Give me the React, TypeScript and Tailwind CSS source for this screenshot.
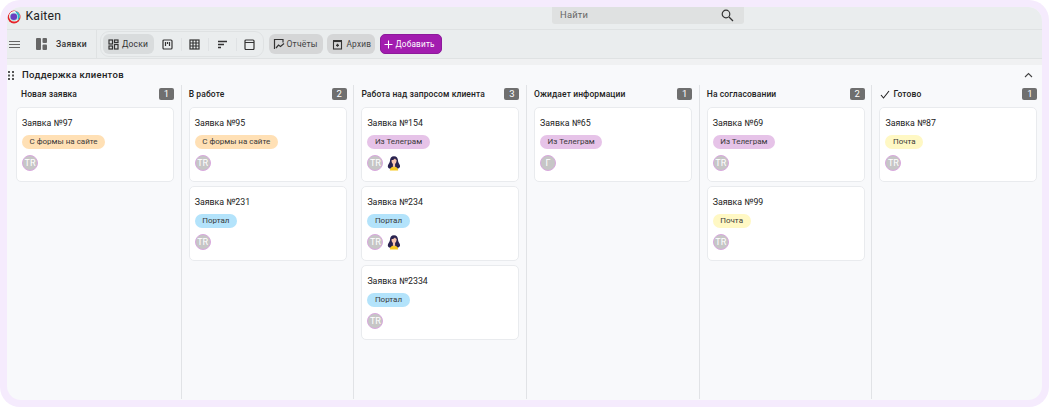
import React from "react";

type Card = { title: string; tag: string; tagClass: string; avatar?: string; girl?: boolean };
type Col = { title: string; count: number; check?: boolean; cards: Card[] };

const orange = "bg-[#ffe0b5]";
const purple = "bg-[#e6c3e8]";
const blue = "bg-[#b3e3fb]";
const yellow = "bg-[#fff8c4]";

const columns: Col[] = [
  { title: "Новая заявка", count: 1, cards: [{ title: "Заявка №97", tag: "С формы на сайте", tagClass: orange }] },
  {
    title: "В работе",
    count: 2,
    cards: [
      { title: "Заявка №95", tag: "С формы на сайте", tagClass: orange },
      { title: "Заявка №231", tag: "Портал", tagClass: blue },
    ],
  },
  {
    title: "Работа над запросом клиента",
    count: 3,
    cards: [
      { title: "Заявка №154", tag: "Из Телеграм", tagClass: purple, girl: true },
      { title: "Заявка №234", tag: "Портал", tagClass: blue, girl: true },
      { title: "Заявка №2334", tag: "Портал", tagClass: blue },
    ],
  },
  {
    title: "Ожидает информации",
    count: 1,
    cards: [{ title: "Заявка №65", tag: "Из Телеграм", tagClass: purple, avatar: "Г" }],
  },
  {
    title: "На согласовании",
    count: 2,
    cards: [
      { title: "Заявка №69", tag: "Из Телеграм", tagClass: purple },
      { title: "Заявка №99", tag: "Почта", tagClass: yellow },
    ],
  },
  { title: "Готово", count: 1, check: true, cards: [{ title: "Заявка №87", tag: "Почта", tagClass: yellow }] },
];

function Girl() {
  return (
    <svg width="14" height="16" viewBox="0 0 14 16">
      <path d="M7 1.200C4.300 1.200 3 3.200 3 5.500c0 2-1.300 3-2 4.800-.6 1.700.2 3.200 2 3.400h7.500c1.900-.2 3-1.700 2.400-3.400-.7-1.800-1.900-2.800-1.900-4.800C11 3.200 9.700 1.200 7 1.200z" fill="#2a2350" />
      <path d="M2.800 15.500c0-2.300 1.800-4 4.200-4s4.200 1.700 4.200 4z" fill="#f7c81e" />
      <path d="M4.500 5.200c1.300-.2 3-1 3.500-1.800.4.800 1 1.400 1.600 1.700 0 1.900-.6 3.200-1.500 3.800v2.300L7 12.800l-1.100-1.600V8.900C5 8.300 4.500 7 4.500 5.200z" fill="#f7c4ae" />
    </svg>
  );
}

function Avatar({ text = "TR" }: { text?: string }) {
  return (
    <div className="w-[16px] h-[16px] rounded-full bg-[#c6c6c6] border border-[#d9a8de] flex items-center justify-center text-white text-[9px] leading-none">
      {text}
    </div>
  );
}

function KanbanCard({ card }: { card: Card }) {
  return (
    <div className="h-[75px] w-[158px] shrink-0 bg-white border border-[#e9ebee] rounded-[5px] pl-[5px] pt-[8px] mb-[4px]">
      <div className="text-[8.800px] leading-[15px] text-[#222]">{card.title}</div>
      <div className="flex mt-[4px]">
        <span className={`h-[14px] px-[7.500px] rounded-full text-[8px] leading-[14px] text-[#3a3a3a] ${card.tagClass}`}>
          {card.tag}
        </span>
      </div>
      <div className="flex items-center gap-[4px] mt-[6px]">
        <Avatar text={card.avatar} />
        {card.girl && <Girl />}
      </div>
    </div>
  );
}

function Divider() {
  return <div className="w-px h-[13px] bg-[#dfe2e4] mx-[7.750px]" />;
}

const ic = "#333333";

function GroupIcon() {
  return (
    <svg width="11" height="11" viewBox="0 0 11 11" fill="none" stroke={ic} strokeWidth="1.200">
      <rect x="1" y="1" width="3.500" height="4" />
      <rect x="6.500" y="1" width="3.500" height="2.500" />
      <rect x="1" y="7" width="3.500" height="3" />
      <rect x="6.500" y="5.500" width="3.500" height="4.500" />
    </svg>
  );
}

export default function App() {
  return (
    <div className="w-[1050px] h-[407px] bg-white overflow-hidden font-['Roboto',sans-serif]">
      <div className="w-[1049px] h-[407px] rounded-[20px] bg-[#f5ebfd] p-[7px]">
        <div className="w-[1035px] h-[393px] rounded-[14px] overflow-hidden bg-[#f8f9fb] flex flex-col">
          <header className="h-[23px] shrink-0 bg-[#eaedee] border-b border-[#dfe2e3] relative flex items-center">
            <svg width="14" height="14" viewBox="0 0 14 14" className="mt-[-3px]">
              <circle cx="7" cy="7" r="6.500" fill="#e5242a" />
              <circle cx="7.300" cy="6.300" r="5.300" fill="#ffffff" />
              <path d="M7.500 1a5.300 5.300 0 0 1 5.300 5.300c0 1.800-1 3.400-2.300 4.300 1-3.500-.2-7.500-3-9.600z" fill="#27b5c9" />
              <circle cx="6.800" cy="6.800" r="4.300" fill="#a6e0dc" />
              <circle cx="6.800" cy="6.800" r="3.300" fill="#6b3fc0" />
            </svg>
            <span className="ml-[4.500px] text-[12.200px] leading-none text-[#222] tracking-[0.2px] mt-[-4px]">Kaiten</span>
            <div className="absolute left-[545px] top-0 w-[192px] h-[17px] bg-[#dfe1e1] rounded-b-[3px] flex items-center justify-between pl-[8px] pr-[10px]">
              <span className="text-[9.400px] text-[#666] tracking-[0.2px]">Найти</span>
              <svg width="13" height="13" viewBox="0 0 13 13" fill="none" stroke="#333" strokeWidth="1.200">
                <circle cx="5" cy="5" r="3.800" />
                <path d="M8 8l4 4" />
              </svg>
            </div>
          </header>

          <div className="h-[29px] shrink-0 bg-[#eaedee] border-b border-[#dfe2e3] flex items-center">
            <svg width="11" height="7" viewBox="0 0 11 7" className="ml-[2px]" stroke="#666" strokeWidth="1">
              <path d="M0 .5h11M0 3.500h11M0 6.500h11" />
            </svg>
            <svg width="11" height="12" viewBox="0 0 11 12" className="ml-[16px]" fill="#666">
              <rect x="0" y="0" width="5" height="12" rx="1" />
              <rect x="6.500" y="0" width="4.500" height="5" rx="1" />
              <rect x="6.500" y="6.500" width="4.500" height="5.500" rx="1" />
            </svg>
            <span className="ml-[9px] text-[8.600px] font-medium text-[#333] tracking-[0.3px]">Заявки</span>
            <div className="w-px h-[29px] bg-[#dfe2e3] ml-[9px]" />
            <div className="ml-[3px] h-[26px] w-[164px] border border-[#dfe2e3] rounded-[9px] flex items-center pl-[2px]">
              <div className="h-[20px] w-[51px] rounded-[6px] bg-[#d9dcdd] flex items-center pl-[5px] gap-[3px]">
                <GroupIcon />
                <span className="text-[8.500px] text-[#333] tracking-[0.2px]">Доски</span>
              </div>
              <svg width="11" height="11" viewBox="0 0 11 11" fill="none" stroke={ic} strokeWidth="1.200" className="ml-[8px]">
                <rect x="1" y="1" width="9" height="9" rx="1" />
                <path d="M3.500 3v4M5.500 3v2M7.500 3v4" />
              </svg>
              <Divider />
              <svg width="11" height="11" viewBox="0 0 11 11" fill="none" stroke={ic} strokeWidth="1.200">
                <rect x="1" y="1" width="9" height="9" />
                <path d="M1 4h9M1 7h9M4 1v9M7 1v9" />
              </svg>
              <Divider />
              <svg width="11" height="11" viewBox="0 0 11 11" fill="none" stroke={ic} strokeWidth="1.300">
                <path d="M1 2.500h9M1 5.500h6M1 8.500h3" />
              </svg>
              <Divider />
              <svg width="11" height="11" viewBox="0 0 11 11" fill="none" stroke={ic} strokeWidth="1.200">
                <rect x="1" y="1" width="9" height="9.500" rx="1" />
                <path d="M1 3.500h9" />
              </svg>
            </div>
            <div className="ml-[5px] h-[20px] w-[54px] rounded-[6px] bg-[#d5d6d7] flex items-center pl-[4px] gap-[1.500px]">
              <svg width="12" height="12" viewBox="0 0 12 12" fill="none" stroke={ic} strokeWidth="1.200">
                <path d="M1.500 11V1.500h8.500v3" />
                <path d="M3 10l2.500-3 2 1.500L11 5.500" />
              </svg>
              <span className="text-[8.600px] text-[#444] tracking-[0.2px]">Отчёты</span>
            </div>
            <div className="ml-[4.500px] h-[20px] w-[48px] rounded-[6px] bg-[#d5d6d7] flex items-center pl-[5px] gap-[3px]">
              <svg width="11" height="11" viewBox="0 0 11 11" fill="none" stroke={ic}>
                <rect x="1.500" y="2.500" width="8" height="7.500" strokeWidth="1.100" />
                <path d="M1 2h9" strokeWidth="2" />
                <path d="M5.500 4.800v3M4 6.300h3" strokeWidth="1.300" />
              </svg>
              <span className="text-[8.300px] text-[#444] tracking-[0.2px]">Архив</span>
            </div>
            <div className="ml-[5px] h-[20.500px] w-[61.500px] rounded-[5px] bg-[#a21caf] border border-[#8d1a9b] flex items-center pl-[3px] gap-[2px] text-white">
              <svg width="9" height="9" viewBox="0 0 9 9" stroke="#fff" strokeWidth="1.100">
                <path d="M4.500 0.500v8M0.500 4.500h8" />
              </svg>
              <span className="text-[8.200px] tracking-[0.2px]">Добавить</span>
            </div>
          </div>

          <div className="h-[6px] shrink-0 bg-[#f0f1f2]" />

          <div className="h-[20px] shrink-0 flex items-center">
            <svg width="6" height="9" viewBox="0 0 6 9" fill="#555" className="ml-[1px]">
              <rect x="0" y="0" width="2" height="2" />
              <rect x="4" y="0" width="2" height="2" />
              <rect x="0" y="3.500" width="2" height="2" />
              <rect x="4" y="3.500" width="2" height="2" />
              <rect x="0" y="7" width="2" height="2" />
              <rect x="4" y="7" width="2" height="2" />
            </svg>
            <span className="ml-[8px] text-[9.500px] font-medium text-[#222] tracking-[0.3px]">Поддержка клиентов</span>
            <svg width="9" height="6" viewBox="0 0 9 6" fill="none" stroke="#444" strokeWidth="1.100" className="ml-auto mr-[9px] mt-[-1px]">
              <path d="M1 5l3.500-3.500L8 5" />
            </svg>
          </div>

          <div className="flex flex-1 pl-[2px] min-h-0">
            {columns.map((col, i) => (
              <div key={col.title} className={`w-[172.700px] shrink-0 pl-[7px] mb-[1px] ${i < 5 ? "border-r border-[#e1e3e6]" : ""}`}>
                <div className={`h-[18px] w-[158px] flex items-center justify-between mb-[4px] ${i === 0 ? "pl-[5px]" : ""}`}>
                  <span className="text-[8.500px] font-medium text-[#222] tracking-[0.1px] flex items-center gap-[3px] whitespace-nowrap">
                    {col.check && (
                      <svg width="10" height="9" viewBox="0 0 10 9" fill="none" stroke="#222" strokeWidth="1.100" className="ml-[1px]">
                        <path d="M1 5l2.500 3L9 1" />
                      </svg>
                    )}
                    {col.title}
                  </span>
                  <span className="w-[15px] h-[12px] rounded-[2px] bg-[#6f6f6f] text-white text-[9.500px] leading-[12px] text-center">
                    {col.count}
                  </span>
                </div>
                {col.cards.map((c) => (
                  <KanbanCard key={c.title} card={c} />
                ))}
              </div>
            ))}
          </div>
        </div>
      </div>
    </div>
  );
}
